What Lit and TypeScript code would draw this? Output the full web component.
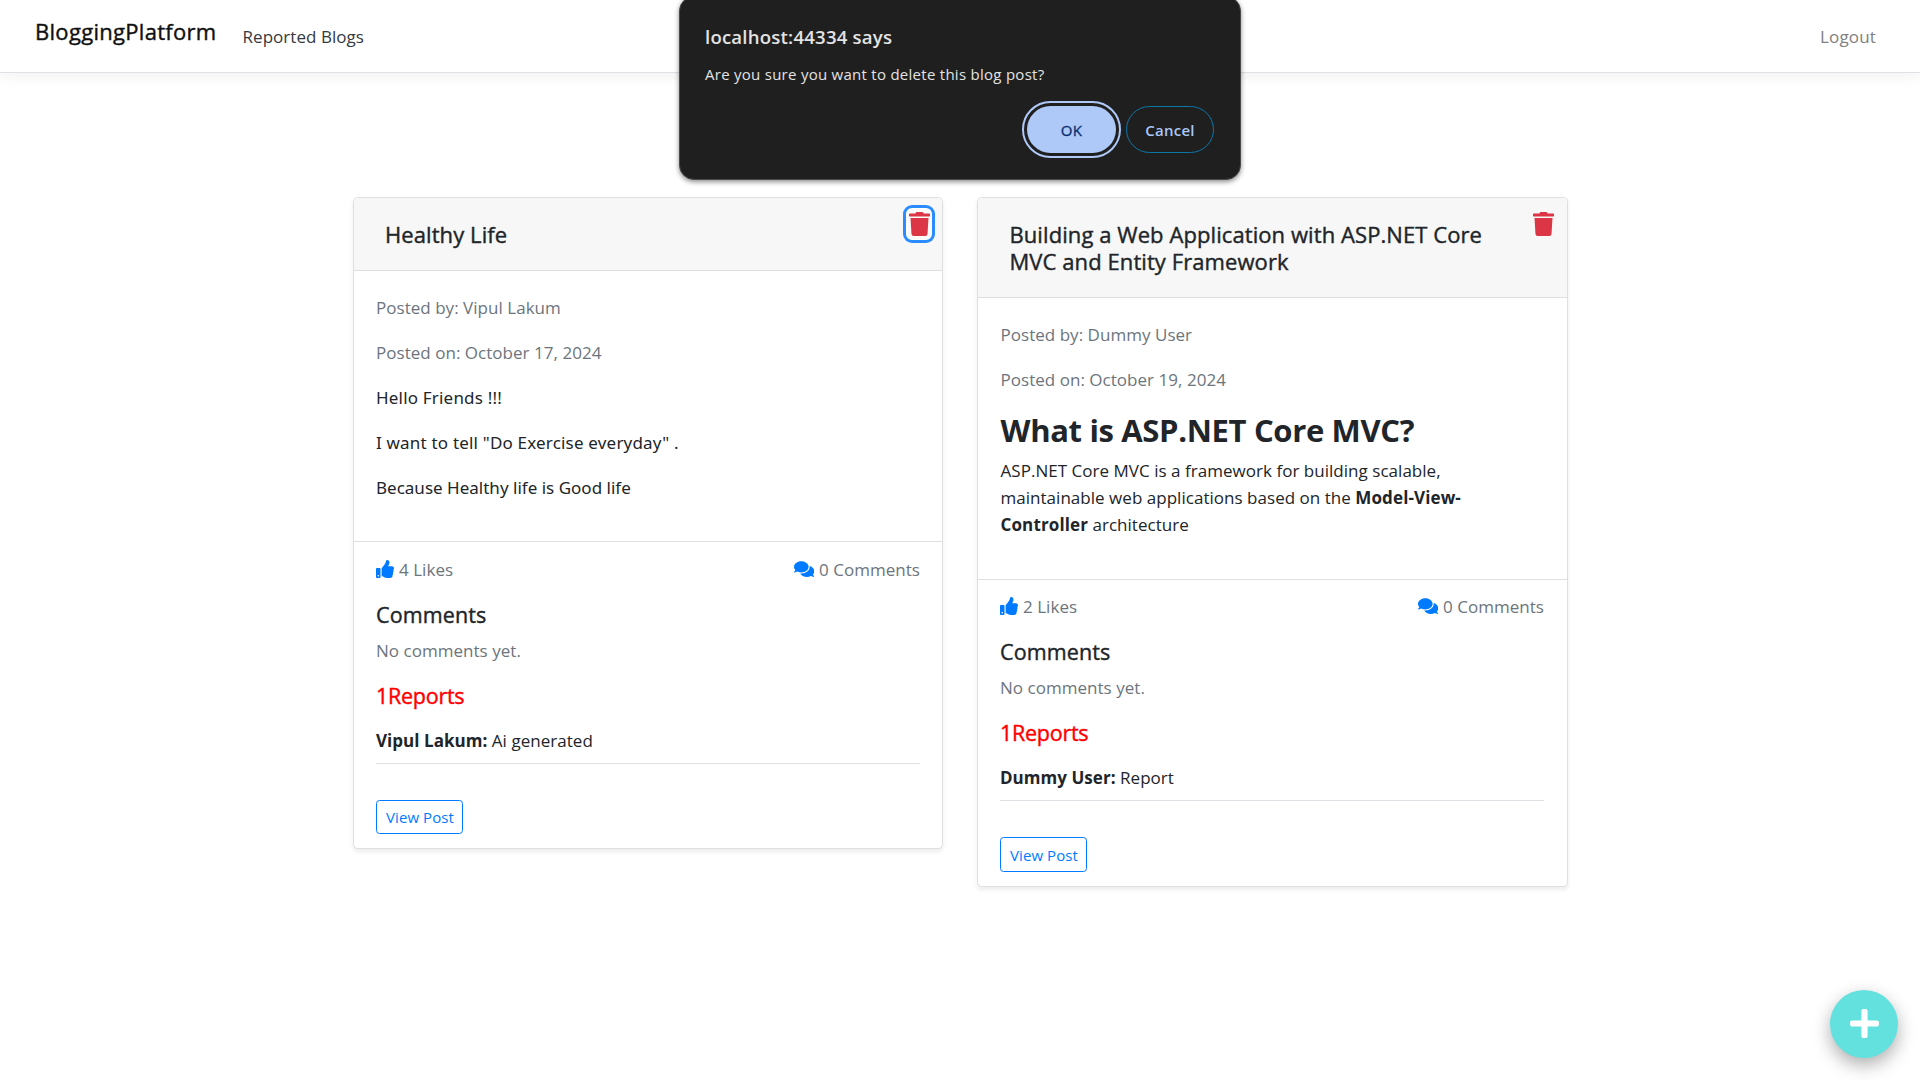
import { LitElement, html, svg, css, TemplateResult } from "lit";
import { customElement, property } from "lit/decorators.js";
import { classMap } from "lit/directives/class-map.js";

interface Post {
  title: string;
  author: string;
  date: string;
  content: TemplateResult;
  likes: number;
  comments: number;
  reports: { user: string; text: string }[];
}

const trashIcon = svg`<path d="M432 32H312l-9.4-18.7A24 24 0 0 0 281.1 0H166.8a23.72 23.72 0 0 0-21.4 13.3L136 32H16A16 16 0 0 0 0 48v32a16 16 0 0 0 16 16h416a16 16 0 0 0 16-16V48a16 16 0 0 0-16-16zM53.2 467a48 48 0 0 0 47.9 45h245.8a48 48 0 0 0 47.9-45L416 128H32z"/>`;
const thumbIcon = svg`<path d="M104 224H24c-13.255 0-24 10.745-24 24v240c0 13.255 10.745 24 24 24h80c13.255 0 24-10.745 24-24V248c0-13.255-10.745-24-24-24zM64 472c-13.255 0-24-10.745-24-24s10.745-24 24-24 24 10.745 24 24-10.745 24-24 24zM384 81.452c0 42.416-25.97 66.208-33.277 94.548h101.723c33.397 0 59.397 27.746 59.553 58.098.084 17.938-7.546 37.249-19.439 49.197l-.11.11c9.836 23.337 8.237 56.037-9.308 79.469 8.681 25.895-.069 57.704-16.382 74.757 4.298 17.598 2.244 32.575-6.148 44.632C440.202 511.587 389.616 512 346.839 512l-2.845-.001c-48.287-.017-87.806-17.598-119.56-31.725-15.957-7.099-36.821-15.887-52.651-16.178-6.54-.12-11.783-5.457-11.783-11.998v-213.77c0-3.2 1.282-6.271 3.558-8.521 39.614-39.144 56.648-80.587 89.117-113.111 14.804-14.832 20.188-37.236 25.393-58.902C282.515 39.293 291.817 0 312 0c24 0 72 8 72 81.452z"/>`;
const commentsIcon = svg`<path d="M416 192c0-88.4-93.1-160-208-160S0 103.6 0 192c0 34.3 14.1 65.9 38 92-13.4 30.2-35.5 54.2-35.8 54.5-2.2 2.3-2.8 5.7-1.5 8.7S4.8 352 8 352c36.6 0 66.9-12.3 88.7-25 32.2 15.7 70.3 25 111.3 25 114.9 0 208-71.6 208-160zm122 220c23.9-26 38-57.7 38-92 0-66.9-53.5-124.2-129.3-148.1.9 6.6 1.3 13.3 1.3 20.1 0 105.9-107.7 192-240 192-10.8 0-21.3-.8-31.7-1.9C207.8 439.6 281.8 480 368 480c41 0 79.1-9.2 111.3-25 21.8 12.7 52.1 25 88.7 25 3.2 0 6.1-1.9 7.3-4.8 1.3-2.9.7-6.3-1.5-8.7-.3-.2-22.4-24.2-35.8-54.5z"/>`;
const plusIcon = svg`<path d="M416 208H272V64c0-17.67-14.33-32-32-32h-32c-17.67 0-32 14.33-32 32v144H32c-17.67 0-32 14.33-32 32v32c0 17.67 14.33 32 32 32h144v144c0 17.67 14.33 32 32 32h32c17.67 0 32-14.33 32-32V304h144c17.67 0 32-14.33 32-32v-32c0-17.67-14.33-32-32-32z"/>`;

@customElement("blog-card")
export class BlogCard extends LitElement {
  @property({ attribute: false }) post!: Post;
  @property({ type: Boolean }) pending = false;
  @property({ type: Boolean }) rich = false;

  static styles = css`
    :host {
      display: block;
      box-sizing: border-box;
      background: #fff;
      border: 1px solid #dfdfdf;
      border-radius: 4.5px;
      box-shadow: 0 2.25px 4.5px rgba(0, 0, 0, 0.075);
      color: #212529;
      font: 400 17px/27px "Open Sans", "Noto Sans", sans-serif;
      letter-spacing: 0.03px;
    }
    p, h2, h5 { margin: 0; }
    .header {
      display: flex;
      align-items: flex-start;
      justify-content: space-between;
      padding: 7px 7px 22px 31px;
      background: #f7f7f7;
      border-bottom: 1px solid #dfdfdf;
      border-radius: 4px 4px 0 0;
    }
    .title {
      width: 490px;
      margin-top: 16px;
      font-size: 22px;
      line-height: 27px;
      font-weight: 500;
      letter-spacing: 0.08px;
      -webkit-text-stroke: 0.4px currentColor;
    }
    .delete {
      display: flex;
      box-sizing: border-box;
      align-items: center;
      justify-content: center;
      width: 32px;
      height: 38px;
      margin-bottom: -10px;
      padding: 0;
      border: 0;
      border-radius: 9px;
      background: none;
      color: #dc3545;
    }
    .delete.focused {
      background: #fafafa;
      box-shadow: inset 0 0 0 3px #2a8cff, inset 0 0 0 4px #fff;
    }
    svg { display: block; fill: currentColor; }
    .delete svg { width: 21px; height: 24px; }
    .body { padding: 23px 22px 22px; }
    .meta { margin-bottom: 18px; color: #6c757d; }
    .content p { margin-bottom: 18px; }
    .plain p {
      font-family: "Noto Sans", "Open Sans", sans-serif;
      letter-spacing: 0.19px;
    }
    .plain p:last-child { letter-spacing: 0.01px; }
    .rich p { width: 472px; margin-bottom: 19px; letter-spacing: 0.03px; }
    .rich b { letter-spacing: 0.12px; }
    .rich h2 {
      margin-bottom: 8px;
      font-size: 31px;
      line-height: 38px;
      font-weight: 700;
      letter-spacing: -0.34px;
    }
    .footer { padding: 14px 22px; border-top: 1px solid #dfdfdf; }
    .stats {
      display: flex;
      justify-content: space-between;
      margin-bottom: 18px;
      color: #6c757d;
    }
    .stat { display: flex; gap: 5px; }
    .stat svg { height: 18px; margin-top: 4px; color: #007bff; }
    .thumb { width: 18px; }
    .bubbles { width: 20.25px; }
    .heading {
      font-size: 21.5px;
      line-height: 27px;
      font-weight: 500;
      letter-spacing: 0.12px;
      -webkit-text-stroke: 0.4px currentColor;
    }
    .none { margin: 9px 0 18px; color: #6c757d; }
    .reports { margin-bottom: 18px; color: #f00; letter-spacing: -0.27px; }
    .report {
      padding-bottom: 9px;
      margin-bottom: 36px;
      border-bottom: 1px solid #dee2e6;
    }
    .report b { letter-spacing: 0.04px; }
    .view {
      display: block;
      box-sizing: border-box;
      width: 87px;
      height: 34px;
      padding: 0 0 1px 1px;
      border: 1px solid #007bff;
      border-radius: 3.6px;
      background: #fff;
      color: #007bff;
      font: 400 15px/24px "Open Sans", sans-serif;
      letter-spacing: 0.08px;
    }
    :host([rich]) .body { padding-left: 22.5px; }
    :host([rich]) .body, :host([rich]) .footer { padding-right: 23px; }
    :host([rich]) .header { padding-right: 8px; padding-left: 31.5px; }
    :host([rich]) .footer { padding-top: 13px; }
    :host([rich]) .view { height: 35px; padding-bottom: 0; }
  `;

  render() {
    const p = this.post;
    return html`
      <div class="header">
        <h5 class="title">${p.title}</h5>
        <button class=${classMap({ delete: true, focused: this.pending })} aria-label="Delete">
          <svg viewBox="0 0 448 512">${trashIcon}</svg>
        </button>
      </div>
      <div class="body">
        <p class="meta">Posted by: ${p.author}</p>
        <p class="meta">Posted on: ${p.date}</p>
        <div class=${classMap({ content: true, rich: this.rich, plain: !this.rich })}>${p.content}</div>
      </div>
      <div class="footer">
        <div class="stats">
          <div class="stat"><svg class="thumb" viewBox="0 0 512 512">${thumbIcon}</svg><span>${p.likes} Likes</span></div>
          <div class="stat"><svg class="bubbles" viewBox="0 0 576 512">${commentsIcon}</svg><span>${p.comments} Comments</span></div>
        </div>
        <h5 class="heading">Comments</h5>
        <p class="none">No comments yet.</p>
        <h5 class="heading reports">${p.reports.length}Reports</h5>
        ${p.reports.map((r) => html`<div class="report"><b>${r.user}:</b> ${r.text}</div>`)}
        <button class="view">View Post</button>
      </div>
    `;
  }
}

@customElement("confirm-dialog")
export class ConfirmDialog extends LitElement {
  static styles = css`
    :host {
      display: block;
      box-sizing: border-box;
      width: 562px;
      height: 184px;
      padding: 27px 26px 0 25px;
      border: 1px solid #4a4a4a;
      border-radius: 15px;
      background: #1f1f1f;
      box-shadow: 0 2px 5px rgba(0, 0, 0, 0.45);
      color: #e3e3e3;
      font: 400 15px/20px "Open Sans", sans-serif;
    }
    .origin {
      font-size: 18.6px;
      line-height: 26px;
      font-weight: 600;
      letter-spacing: 0.2px;
    }
    .message { margin-top: 14px; letter-spacing: 0.27px; }
    .actions {
      display: flex;
      justify-content: flex-end;
      gap: 10px;
      margin-top: 22px;
    }
    button {
      box-sizing: border-box;
      height: 47px;
      padding: 0;
      border-radius: 24px;
      font: 600 15px/20px "Open Sans", sans-serif;
      letter-spacing: 0.25px;
    }
    .ok {
      width: 89px;
      border: 0;
      background: #aec9f7;
      color: #0c2f70;
      font-weight: 500;
      -webkit-text-stroke: 0.3px currentColor;
      outline: 2px solid #aec9f7;
      outline-offset: 3px;
    }
    .cancel {
      width: 88px;
      border: 1px solid #0b76a8;
      background: none;
      color: #a8c7fa;
    }
  `;
  render() {
    return html`
      <div class="origin">localhost:44334 says</div>
      <div class="message">Are you sure you want to delete this blog post?</div>
      <div class="actions">
        <button class="ok">OK</button>
        <button class="cancel">Cancel</button>
      </div>
    `;
  }
}

const posts: Post[] = [
  {
    title: "Healthy Life",
    author: "Vipul Lakum",
    date: "October 17, 2024",
    content: html`
      <p>Hello Friends !!!</p>
      <p>I want to tell "Do Exercise everyday" .</p>
      <p>Because Healthy life is Good life</p>`,
    likes: 4,
    comments: 0,
    reports: [{ user: "Vipul Lakum", text: "Ai generated" }],
  },
  {
    title: "Building a Web Application with ASP.NET Core MVC and Entity Framework",
    author: "Dummy User",
    date: "October 19, 2024",
    content: html`
      <h2>What is ASP.NET Core MVC?</h2>
      <p>ASP.NET Core MVC is a framework for building scalable, maintainable web applications based on the <b>Model-View-Controller</b> architecture</p>`,
    likes: 2,
    comments: 0,
    reports: [{ user: "Dummy User", text: "Report" }],
  },
];

@customElement("app-root")
export class AppRoot extends LitElement {
  static styles = css`
    :host {
      display: block;
      position: relative;
      height: 1080px;
      overflow: hidden;
      background: #fff;
      color: #212529;
      font: 400 17px/27px "Open Sans", sans-serif;
    }
    .nav {
      display: flex;
      align-items: flex-start;
      box-sizing: border-box;
      height: 73px;
      padding: 0 44px 0 35px;
      border-bottom: 1px solid #dee2e6;
      box-shadow: 0 4.5px 13.5px rgba(0, 0, 0, 0.05);
    }
    .brand {
      margin-top: 18px;
      font-size: 22px;
      font-weight: 500;
      letter-spacing: 0.3px;
      color: #111;
      -webkit-text-stroke: 0.4px currentColor;
    }
    .link { margin: 23px 0 0 26px; color: #343a40; letter-spacing: 0.04px; }
    .logout { margin: 23px 0 0 auto; color: #808080; letter-spacing: 0.15px; }
    .posts {
      display: grid;
      grid-template-columns: 590px 591px;
      gap: 34px;
      align-items: start;
      padding: 124px 0 0 353px;
    }
    .dialog { position: absolute; left: 679px; top: -4px; }
    .add {
      position: absolute;
      right: 22px;
      bottom: 22px;
      display: flex;
      align-items: center;
      justify-content: center;
      width: 68px;
      height: 68px;
      padding: 0 0 2px;
      border: 0;
      border-radius: 50%;
      background: #62e1df;
      color: #fff;
      box-shadow: 0 7px 18px rgba(0, 0, 0, 0.32);
    }
    .add svg { display: block; width: 29px; height: 33px; fill: currentColor; }
  `;
  render() {
    return html`
      <nav class="nav">
        <span class="brand">BloggingPlatform</span>
        <span class="link">Reported Blogs</span>
        <span class="logout">Logout</span>
      </nav>
      <main class="posts">
        ${posts.map((p, i) => html`<blog-card .post=${p} ?pending=${i === 0} ?rich=${i === 1}></blog-card>`)}
      </main>
      <confirm-dialog class="dialog"></confirm-dialog>
      <button class="add" aria-label="Add post"><svg viewBox="0 0 448 512">${plusIcon}</svg></button>
    `;
  }
}
